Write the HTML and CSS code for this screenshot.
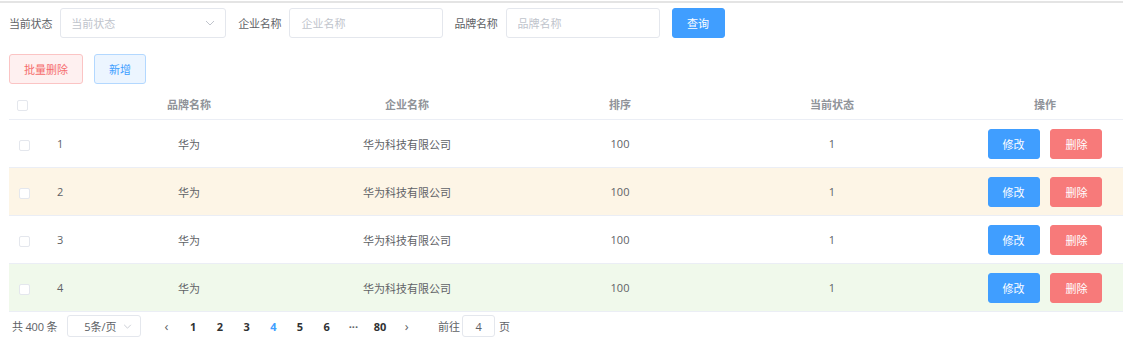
FILE: index.html
```html
<!DOCTYPE html>
<html lang="zh-CN">
<head>
    <meta charset="UTF-8">
    <title>品牌管理</title>
    <link rel="stylesheet" href="styles.css">
</head>
<body>
    <div class="page">
        <form class="search-bar">
            <label class="search-label">当前状态</label>
            <div class="select status-select">
                <span class="placeholder">当前状态</span>
                <svg class="arrow" width="10" height="6" viewBox="0 0 10 6"><path d="M1 1l4 4 4-4" fill="none" stroke="#c0c4cc" stroke-width="1"/></svg>
            </div>
            <label class="search-label">企业名称</label>
            <input class="text-input" type="text" placeholder="企业名称">
            <label class="search-label">品牌名称</label>
            <input class="text-input" type="text" placeholder="品牌名称">
            <button type="button" class="btn btn-primary query-btn">查询</button>
        </form>

        <div class="toolbar">
            <button class="btn btn-danger-plain">批量删除</button>
            <button class="btn btn-primary-plain">新增</button>
        </div>

        <table class="brand-table">
            <colgroup>
                <col style="width:36px">
                <col style="width:38px">
                <col style="width:212px">
                <col style="width:224px">
                <col style="width:202px">
                <col style="width:222px">
                <col style="width:204px">
            </colgroup>
            <thead>
                <tr>
                    <th><span class="checkbox head-check"></span></th>
                    <th></th>
                    <th>品牌名称</th>
                    <th>企业名称</th>
                    <th>排序</th>
                    <th>当前状态</th>
                    <th>操作</th>
                </tr>
            </thead>
            <tbody id="brandBody"></tbody>
        </table>

        <div class="pager">
            <span class="total">共 400 条</span>
            <div class="select size-select">
                <span>5条/页</span>
                <svg class="arrow" width="9" height="5" viewBox="0 0 10 6"><path d="M1 1l4 4 4-4" fill="none" stroke="#c0c4cc" stroke-width="1"/></svg>
            </div>
            <ul class="pages">
                <li class="nav">&lsaquo;</li>
                <li>1</li>
                <li>2</li>
                <li>3</li>
                <li class="active">4</li>
                <li>5</li>
                <li>6</li>
                <li class="more">···</li>
                <li>80</li>
                <li class="nav">&rsaquo;</li>
            </ul>
            <span class="jump">前往</span>
            <input class="jump-input" type="text" value="4">
            <span class="jump">页</span>
        </div>
    </div>

    <script>
        const brands = [
            { id: 1, name: '华为', company: '华为科技有限公司', sort: 100, status: 1, tone: '' },
            { id: 2, name: '华为', company: '华为科技有限公司', sort: 100, status: 1, tone: 'warning-row' },
            { id: 3, name: '华为', company: '华为科技有限公司', sort: 100, status: 1, tone: '' },
            { id: 4, name: '华为', company: '华为科技有限公司', sort: 100, status: 1, tone: 'success-row' }
        ];

        function renderBrands() {
            const tbody = document.getElementById('brandBody');
            tbody.innerHTML = '';
            brands.forEach(brand => {
                const row = document.createElement('tr');
                if (brand.tone) row.className = brand.tone;
                row.innerHTML = `
                    <td><span class="checkbox row-check"></span></td>
                    <td class="index">${brand.id}</td>
                    <td>${brand.name}</td>
                    <td>${brand.company}</td>
                    <td>${brand.sort}</td>
                    <td>${brand.status}</td>
                    <td class="actions">
                        <button class="btn btn-primary">修改</button>
                        <button class="btn btn-danger">删除</button>
                    </td>
                `;
                tbody.appendChild(row);
            });
        }

        renderBrands();
    </script>
</body>
</html>
```

FILE: styles.css
```css
html, body {
    overflow: hidden;
}

body {
    margin: 0;
    font-family: "Open Sans", "Noto Sans CJK SC", sans-serif;
    font-size: 11px;
    color: #606266;
    background: #fff;
}

.page {
    border-top: 2px solid #e4e4e4;
    margin-top: 1px;
    padding: 5px 0 0 9px;
    width: 1150px;
}

.search-bar {
    display: flex;
    align-items: center;
    height: 30px;
}

.search-label {
    margin-right: 8px;
    color: #606266;
    letter-spacing: -0.2px;
}

.select,
.text-input {
    box-sizing: border-box;
    height: 30px;
    border: 1px solid #e4e7ed;
    border-radius: 3px;
    background: #fff;
    font: inherit;
    color: #606266;
}

.select {
    display: flex;
    align-items: center;
    justify-content: space-between;
    padding: 0 10px;
}

.status-select {
    width: 166px;
    margin-right: 12px;
}

.placeholder {
    color: #c0c4cc;
}

.text-input {
    width: 154px;
    padding: 0 11px;
    margin-right: 11px;
    outline: none;
}

.text-input::placeholder {
    color: #c0c4cc;
}

.btn {
    box-sizing: border-box;
    height: 30px;
    border: 1px solid transparent;
    border-radius: 3px;
    font: inherit;
    cursor: pointer;
    padding: 0;
}

.btn-primary {
    background: #409eff;
    border-color: #409eff;
    color: #fff;
}

.btn-danger {
    background: #f56c6c;
    border-color: #f56c6c;
    color: #fff;
}

.query-btn {
    width: 53px;
    margin-left: 1px;
}

.toolbar {
    display: flex;
    gap: 11px;
    margin-top: 16px;
}

.btn-danger-plain {
    width: 74px;
    background: #fef0f0;
    border-color: #fbc4c4;
    color: #f56c6c;
}

.btn-primary-plain {
    width: 52px;
    background: #ecf5ff;
    border-color: #b3d8ff;
    color: #409eff;
}

.brand-table {
    table-layout: fixed;
    border-collapse: collapse;
    width: 1138px;
    margin-top: 4px;
}

.brand-table th,
.brand-table td {
    padding: 0;
    text-align: center;
    border-bottom: 1px solid #ebeef5;
}

.brand-table th {
    height: 31px;
    color: #909399;
    font-weight: 600;
}

.brand-table td {
    height: 47px;
}

.brand-table td.index {
    text-align: left;
    padding-left: 12px;
}

.warning-row {
    background: #fdf5e6;
}

.success-row {
    background: #f0f9eb;
}

.checkbox {
    display: inline-block;
    box-sizing: border-box;
    width: 11px;
    height: 11px;
    border: 1px solid #e4e7ed;
    border-radius: 2px;
    background: #fff;
    vertical-align: middle;
}

.head-check {
    margin-left: -9px;
}

.row-check {
    margin-left: -5px;
}

.actions {
    white-space: nowrap;
}

.actions .btn {
    width: 52px;
    height: 30px;
    margin: 0 4px;
}

.actions .btn-danger {
    background: #f77a7a;
    border-color: #f77a7a;
}

.pager {
    display: flex;
    align-items: center;
    height: 24px;
    margin-top: 2px;
    padding-left: 3px;
}

.total {
    margin-right: 10px;
    letter-spacing: -0.2px;
}

.size-select {
    width: 74px;
    height: 22px;
    padding: 0 8px 0 16px;
    margin-right: 12px;
}

.pages {
    display: flex;
    list-style: none;
    margin: 0;
    padding: 0;
}

.pages li {
    width: 26.7px;
    text-align: center;
    font-weight: 700;
    color: #303133;
}

.pages li.nav {
    font-weight: 400;
    font-size: 13px;
    line-height: 14px;
    color: #606266;
}

.pages li.active {
    color: #409eff;
}

.pages li.more {
    color: #606266;
}

.jump {
    margin-left: 18px;
}

.jump-input {
    box-sizing: border-box;
    width: 33px;
    height: 22px;
    margin: 0 4px 0 2px;
    border: 1px solid #e4e7ed;
    border-radius: 3px;
    text-align: center;
    font: inherit;
    color: #606266;
}

.jump-input + .jump {
    margin-left: 0;
}
```
